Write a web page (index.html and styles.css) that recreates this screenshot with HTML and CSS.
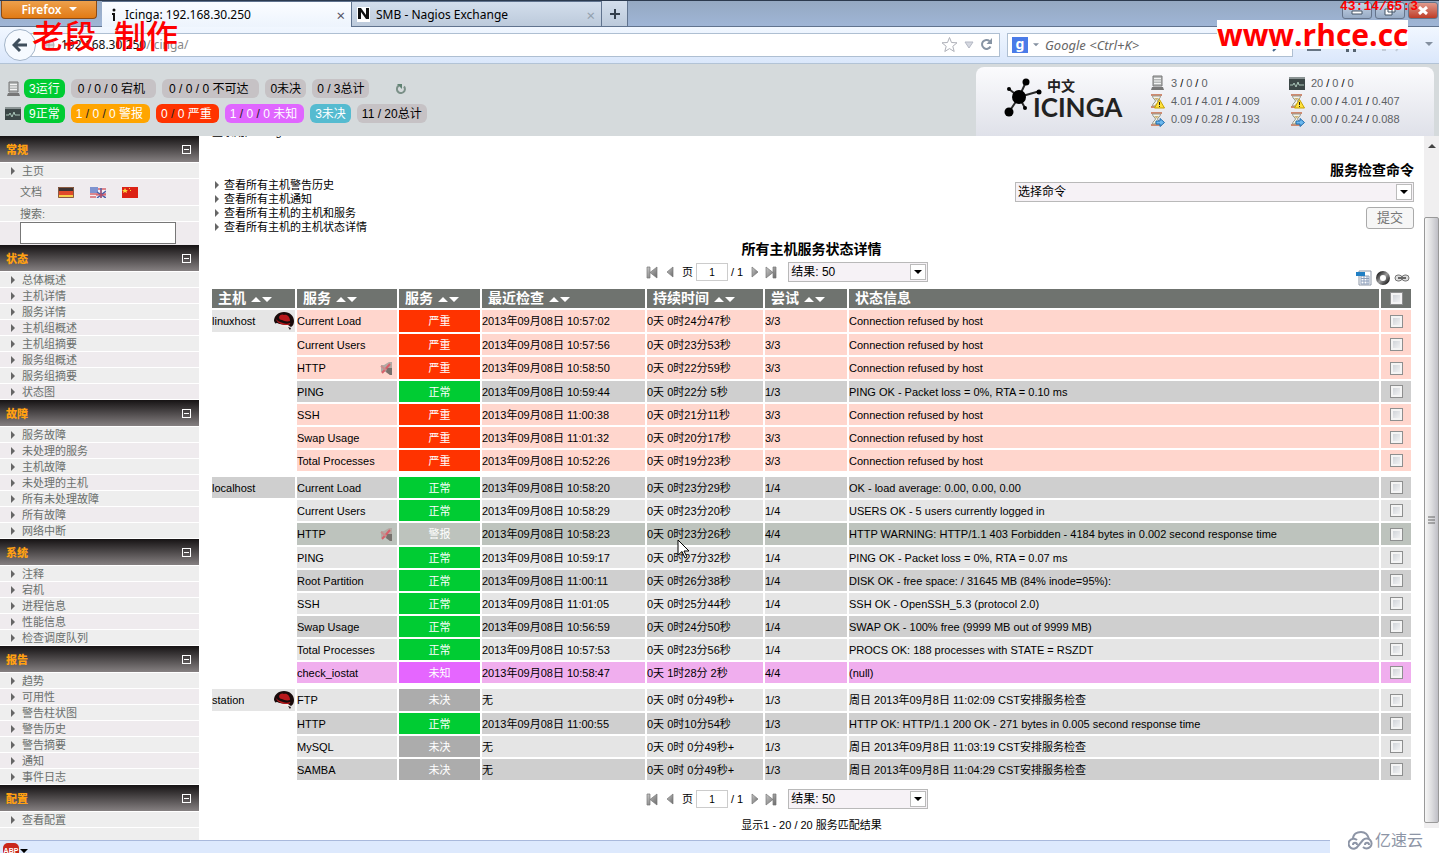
FILE: index.html
```html
<!DOCTYPE html>
<html lang="zh-CN">
<head>
<meta charset="utf-8">
<title>Icinga: 192.168.30.250</title>
<link rel="stylesheet" href="styles.css">
</head>
<body>
<svg class="defs" aria-hidden="true">
  <defs>
    <linearGradient id="metal" x1="0" y1="0" x2="1" y2="1"><stop offset="0" stop-color="#c8c8c8"/><stop offset="1" stop-color="#6a6a6a"/></linearGradient>
    <linearGradient id="ring" x1="0" y1="0" x2="1" y2="1"><stop offset="0" stop-color="#222"/><stop offset=".5" stop-color="#999"/><stop offset="1" stop-color="#222"/></linearGradient>
    <symbol id="server" viewBox="0 0 14 16"><path d="M3 1h9v10H3z" fill="#b5b8b8" stroke="#777"/><path d="M4 3.500h7M4 6h7M4 8.500h7" stroke="#f4f4f4"/><path d="M2 12h11l1 3H1z" fill="#777"/></symbol>
    <symbol id="monitor" viewBox="0 0 16 13"><path d="M0 0h16v13H0z" fill="#3c4747"/><path d="M0 0h16v2H0z" fill="#8b9494"/><path d="M1 8h3l1-2 2 4 2-5 1 3h5" fill="none" stroke="#a9c5b8"/></symbol>
    <symbol id="glass" viewBox="0 0 16 16"><path d="M2 1h11v2H2zM2 13h11v2H2z" fill="#cf8a70"/><path d="M3.500 3h8c0 3-3 3.500-3 5s3 2 3 5h-8c0-3 3-3.500 3-5s-3-2-3-5z" fill="#f2f3ea" stroke="#9a9c90"/><path d="M5 5h5L7.500 7.500zM5 13l2.500-3L10 13z" fill="#cdb67a"/></symbol>
    <symbol id="glass-warn" viewBox="0 0 16 16"><use href="#glass"/><path d="M10.500 6.500L15.500 15h-10z" fill="#ffe23c" stroke="#c7a100"/><path d="M10.500 9v3M10.500 13v1" stroke="#222"/></symbol>
    <symbol id="glass-go" viewBox="0 0 16 16"><use href="#glass"/><path d="M7 10h4V7.500l4.500 4-4.500 4V13H7z" fill="#6cb8ee" stroke="#1c6db0"/></symbol>
    <symbol id="sort" viewBox="0 0 21 6"><path d="M0 6l5-5 5 5zM11 1h10l-5 5z" fill="#fff"/></symbol>
    <symbol id="first" viewBox="0 0 12 13"><path d="M1 1h3v11H1zM11 1v11L4 6.500z" fill="url(#metal)" stroke="#777" stroke-width=".7"/></symbol>
    <symbol id="prev" viewBox="0 0 8 12"><path d="M7 1v10L1 6z" fill="url(#metal)" stroke="#777" stroke-width=".7"/></symbol>
    <symbol id="next" viewBox="0 0 8 12"><path d="M1 1v10l6-5z" fill="url(#metal)" stroke="#777" stroke-width=".7"/></symbol>
    <symbol id="last" viewBox="0 0 12 13"><path d="M8 1h3v11H8zM1 1v11l7-5.500z" fill="url(#metal)" stroke="#777" stroke-width=".7"/></symbol>
    <symbol id="hat" viewBox="0 0 20 18"><path d="M0 9C0 4 4 0 10 0c6 0 10 4 10 9 0 3-1 5-3 6l-3-2C8 13 5 12 3 11 2 11 1 12 1 11z" fill="#190b0b"/><path d="M5 5c1-3 4-3 5-2 3-1 6 2 6 6-3 1-6 0-8-1-2 0-3-1-3-3z" fill="#b8181c"/><path d="M2 7c1 2 4 3 7 4 2 1 5 1 7 0 1 1-1 2-3 2-5 0-10-2-11-6z" fill="#b8181c"/><path d="M5 12c3 1 6 2 9 1l1 4-3-2-5-1z" fill="#f6e9e6"/><path d="M14 15l3 1-1 2z" fill="#190b0b"/></symbol>
    <symbol id="mute" viewBox="0 0 13 15"><path d="M1 4h3l5-3h3v13h-2l-4-3H1z" fill="#b3aaa4"/><path d="M7 7h5v7h-2l-4-3z" fill="#77706c"/><path d="M2 12L10 3" stroke="#d8606a" stroke-width="2"/><path d="M1 5l5 4" stroke="#c98d8d" stroke-width="2"/></symbol>
    <symbol id="down" viewBox="0 0 10 6"><path d="M0 0h10L5 5z" fill="currentColor"/></symbol>
  </defs>
</svg>

<div class="tabs">
  <button class="firefox">Firefox <svg width="8" height="5"><use href="#down"/></svg></button>
  <div class="tab tab-on"><svg width="6" height="14" viewBox="0 0 6 14"><path d="M1 5h3v8H2V7H1z" fill="#111"/><circle cx="3" cy="2" r="1.500" fill="#111"/></svg><span>Icinga: 192.168.30.250</span><button aria-label="关闭">×</button></div>
  <div class="tab"><svg width="13" height="15" viewBox="0 0 13 15"><path d="M0 0h13v15H0z" fill="#fff"/><path d="M1 12V1h3l5 7V1h3v11H9L4 5v7z" fill="#111"/></svg><span>SMB - Nagios Exchange</span><button aria-label="关闭">×</button></div>
  <button class="tab-new" aria-label="新建标签页"><svg width="10" height="10" viewBox="0 0 10 10"><path d="M5 0v10M0 5h10" stroke="#333f4c" stroke-width="2"/></svg></button>
  <div class="win">
    <button aria-label="最小化"><svg width="12" height="9" viewBox="0 0 12 9"><path d="M1 5h10v3H1z" fill="#fff" stroke="#456"/></svg></button>
    <button aria-label="还原"><svg width="12" height="11" viewBox="0 0 12 11"><path d="M4 1h7v6H4zM1 4h7v6H1z" fill="#fff" stroke="#456"/></svg></button>
    <button class="win-close" aria-label="关闭窗口"><svg width="12" height="9" viewBox="0 0 12 9"><path d="M2 1l8 7M10 1L2 8" stroke="#fff" stroke-width="3"/></svg></button>
  </div>
</div>

<div class="toolbar">
  <button class="back" aria-label="后退"><svg width="16" height="16" viewBox="0 0 16 16"><path d="M8 2L2 8l6 6M3 8h12" fill="none" stroke="#3f4e5c" stroke-width="3"/></svg></button>
  <div class="url"><svg width="12" height="12" viewBox="0 0 12 12"><circle cx="6" cy="6" r="5" fill="#ddd" stroke="#aaa"/><path d="M6 1v10M1 6h10" stroke="#aaa"/></svg>
    <span class="address"><b>192.168.30.250</b>/icinga/</span>
    <svg width="17" height="17" viewBox="0 0 17 17"><path d="M8.500 1.500l2 5 5.500.3-4.200 3.500 1.400 5.200-4.700-2.900-4.700 2.900 1.400-5.200L1 6.800l5.500-.3z" fill="#fff" stroke="#aeb0b8"/></svg>
    <svg width="10" height="8" viewBox="0 0 10 8"><path d="M1 1h8L5 7z" fill="#d5d8e0" stroke="#b4b8c4"/></svg>
    <svg width="13" height="13" viewBox="0 0 13 13"><path d="M10.500 8.500A4.500 4.500 0 1 1 9.500 3" fill="none" stroke="#8794a4" stroke-width="2"/><path d="M12 0v6H6.500z" fill="#8794a4"/></svg>
  </div>
  <div class="find"><span class="g">g</span><svg class="grey" width="6" height="4"><use href="#down"/></svg><input type="text" aria-label="搜索引擎" placeholder="Google &lt;Ctrl+K&gt;"><svg width="14" height="14" viewBox="0 0 14 14"><circle cx="9" cy="5" r="4" fill="none" stroke="#47688c" stroke-width="2"/><path d="M6 8l-5 5" stroke="#47688c" stroke-width="2"/></svg></div>
  <div class="tools">
    <svg width="16" height="14" viewBox="0 0 16 14"><path d="M1 2h14v11H1z" fill="#667483"/><path d="M5 2h6v5H5z" fill="#e8f0fa"/></svg>
    <svg width="14" height="14" viewBox="0 0 14 14"><path d="M0 7l7-6 7 6h-2v7H9V9H5v5H2V7z" fill="#566370"/></svg>
    <svg width="22" height="14" viewBox="0 0 22 14"><path d="M1 12h4M15 3l4 4-4 6" fill="none" stroke="#c3ccd9" stroke-width="2"/></svg>
    <svg class="grey" width="8" height="5"><use href="#down"/></svg>
  </div>
</div>

<header class="head">
  <div class="counts">
    <div class="count-row"><svg width="16" height="16"><use href="#server"/></svg>
      <a href="#" class="pill green">3运行</a><a href="#" class="pill wider">0 / 0 / 0 宕机</a><a href="#" class="pill wider">0 / 0 / 0 不可达</a><a href="#" class="pill">0未决</a><a href="#" class="pill">0 / 3总计</a>
      <button class="refresh" aria-label="刷新"><svg width="10" height="11" viewBox="0 0 10 11"><path d="M3 2.500A4 4 0 1 0 8 3.500" fill="none" stroke="#7b9088" stroke-width="2"/><path d="M1 1h5v5z" fill="#5f8272"/></svg></button></div>
    <div class="count-row"><svg width="16" height="13"><use href="#monitor"/></svg>
      <a href="#" class="pill green">9正常</a><a href="#" class="pill orange wide">1 <i>/</i> 0 <i>/</i> 0 警报</a><a href="#" class="pill red wide">0 <i>/</i> 0 严重</a><a href="#" class="pill violet wide">1 <i>/</i> 0 <i>/</i> 0 未知</a><a href="#" class="pill cyan">3未决</a><a href="#" class="pill">11 / 20总计</a></div>
  </div>
  <div class="panel">
    <div class="logo">
      <svg width="38" height="40" viewBox="0 0 38 40"><path d="M15 19L22 4M15 19L5 11M15 19L5 34M15 19l6 11M15 19l21-6" stroke="#2a2a2a" stroke-width="2"/><circle cx="15" cy="19" r="7"/><circle cx="22" cy="4" r="3.500"/><circle cx="5" cy="11" r="2"/><circle cx="5" cy="34" r="4.500"/><circle cx="21" cy="30" r="2"/><circle cx="35" cy="14" r="2.500"/></svg>
      <div class="brand"><small>中文</small><strong>ICINGA</strong></div>
    </div>
    <div class="stats">
      <span><svg width="16" height="16"><use href="#server"/></svg>3 <i>/</i> 0 <i>/</i> 0</span>
      <span><svg width="16" height="16"><use href="#glass-warn"/></svg>4.01 <i>/</i> 4.01 <i>/</i> 4.009</span>
      <span><svg width="16" height="16"><use href="#glass-go"/></svg>0.09 <i>/</i> 0.28 <i>/</i> 0.193</span>
    </div>
    <div class="stats">
      <span><svg width="16" height="13"><use href="#monitor"/></svg>20 <i>/</i> 0 <i>/</i> 0</span>
      <span><svg width="16" height="16"><use href="#glass-warn"/></svg>0.00 <i>/</i> 4.01 <i>/</i> 0.407</span>
      <span><svg width="16" height="16"><use href="#glass-go"/></svg>0.00 <i>/</i> 0.24 <i>/</i> 0.088</span>
    </div>
  </div>
</header>

<div class="body">
  <nav class="side">
    <h2>常规<button aria-label="折叠常规"></button></h2>
    <ul><li><a href="#">主页</a></li></ul>
    <div class="docs">文档
      <a href="#" aria-label="Deutsch"><svg width="16" height="11" viewBox="0 0 16 11"><path d="M0 0h16v4H0z" fill="#3c3232"/><path d="M0 4h16v4H0z" fill="#e04a2a"/><path d="M0 8h16v3H0z" fill="#f7cf4c"/><path d="M.5.5h15v10H.5z" fill="none" stroke="#8b5a40"/></svg></a>
      <a href="#" aria-label="English"><svg width="16" height="11" viewBox="0 0 16 11"><path d="M0 0h16v11H0z" fill="#f3eef4"/><path d="M0 0h8v6H0z" fill="#7f93cf"/><path d="M8 2h8M0 7h16M0 10h6" stroke="#d5656c" stroke-width="1.500"/><path d="M11 1v10M7 11l9-7M7 5l9 6" stroke="#4b61a8" stroke-width="1.500"/><path d="M11 3v8M6 8h10" stroke="#d44d58"/></svg></a>
      <a href="#" aria-label="中文"><svg width="16" height="11" viewBox="0 0 16 11"><path d="M0 0h16v11H0z" fill="#dc2114"/><path d="M3 1l1 2h2L4.500 4.200 5 6 3 5 1 6l.5-1.800L0 3h2zM7 1h1v1H7zM8 3h1v1H8z" fill="#fbd33d"/></svg></a>
    </div>
    <label class="search-label" for="q">搜索:</label>
    <div class="search"><input id="q" type="text"></div>

    <h2>状态<button aria-label="折叠状态"></button></h2>
    <ul><li><a href="#">总体概述</a></li><li><a href="#">主机详情</a></li><li><a href="#">服务详情</a></li><li><a href="#">主机组概述</a></li><li><a href="#">主机组摘要</a></li><li><a href="#">服务组概述</a></li><li><a href="#">服务组摘要</a></li><li><a href="#">状态图</a></li></ul>
    <h2>故障<button aria-label="折叠故障"></button></h2>
    <ul><li><a href="#">服务故障</a></li><li><a href="#">未处理的服务</a></li><li><a href="#">主机故障</a></li><li><a href="#">未处理的主机</a></li><li><a href="#">所有未处理故障</a></li><li><a href="#">所有故障</a></li><li><a href="#">网络中断</a></li></ul>
    <h2>系统<button aria-label="折叠系统"></button></h2>
    <ul><li><a href="#">注释</a></li><li><a href="#">宕机</a></li><li><a href="#">进程信息</a></li><li><a href="#">性能信息</a></li><li><a href="#">检查调度队列</a></li></ul>
    <h2>报告<button aria-label="折叠报告"></button></h2>
    <ul><li><a href="#">趋势</a></li><li><a href="#">可用性</a></li><li><a href="#">警告柱状图</a></li><li><a href="#">警告历史</a></li><li><a href="#">警告摘要</a></li><li><a href="#">通知</a></li><li><a href="#">事件日志</a></li></ul>
    <h2>配置<button aria-label="折叠配置"></button></h2>
    <ul><li><a href="#">查看配置</a></li></ul>
  </nav>

  <main class="main">
    <div class="login"><span>登录用户 icingaadmin</span></div>
    <div class="top">
      <ul class="links"><li><a href="#">查看所有主机警告历史</a></li><li><a href="#">查看所有主机通知</a></li><li><a href="#">查看所有主机的主机和服务</a></li><li><a href="#">查看所有主机的主机状态详情</a></li></ul>
      <form class="command">
        <label for="cmd">服务检查命令</label>
        <div class="select"><select id="cmd"><option>选择命令</option></select><span><svg width="8" height="5"><use href="#down"/></svg></span></div>
        <button type="button" disabled>提交</button>
      </form>
    </div>
    <h1>所有主机服务状态详情</h1>
    <div class="pager">
      <button aria-label="首页"><svg width="12" height="13"><use href="#first"/></svg></button><button aria-label="上一页"><svg width="8" height="12"><use href="#prev"/></svg></button>
      <label for="p1">页</label><input id="p1" type="text" value="1"><span>/ 1</span>
      <button aria-label="下一页"><svg width="8" height="12"><use href="#next"/></svg></button><button aria-label="末页"><svg width="12" height="13"><use href="#last"/></svg></button>
      <div class="select"><select aria-label="结果"><option>结果: 50</option></select><span><svg width="8" height="5"><use href="#down"/></svg></span></div>
      <div class="exports">
        <a href="#" aria-label="CSV"><svg width="16" height="16" viewBox="0 0 16 16"><path d="M3 1h12v14H3z" fill="#fff" stroke="#8d97a6"/><path d="M5 6h8v8H5zM5 8.500h8M5 11h8M8 6v8M11 6v8" fill="none" stroke="#8d9fba"/><path d="M0 2h9v4H0z" fill="#217fc4"/></svg></a>
        <a href="#" aria-label="JSON"><svg width="14" height="14" viewBox="0 0 14 14"><circle cx="7" cy="7" r="5" fill="none" stroke="url(#ring)" stroke-width="4"/></svg></a>
        <a href="#" aria-label="链接"><svg width="16" height="8" viewBox="0 0 16 8"><rect x="1" y="1" width="7" height="6" rx="3" fill="#ddd" stroke="#777"/><rect x="8" y="1" width="7" height="6" rx="3" fill="#ddd" stroke="#777"/><path d="M4 4h8" stroke="#666" stroke-width="2"/></svg></a>
      </div>
    </div>

    <table class="grid">
      <colgroup><col class="c-host"><col class="c-svc"><col class="c-state"><col class="c-check"><col class="c-dur"><col class="c-try"><col><col class="c-box"></colgroup>
      <thead><tr><th>主机<svg width="21" height="6"><use href="#sort"/></svg></th><th>服务<svg width="21" height="6"><use href="#sort"/></svg></th><th>服务<svg width="21" height="6"><use href="#sort"/></svg></th><th>最近检查<svg width="21" height="6"><use href="#sort"/></svg></th><th>持续时间<svg width="21" height="6"><use href="#sort"/></svg></th><th>尝试<svg width="21" height="6"><use href="#sort"/></svg></th><th>状态信息</th><th class="box"><input type="checkbox" aria-label="全选"></th></tr></thead>
      <tbody>
      <tr class="crit tall"><td class="host light"><div>linuxhost<svg width="20" height="18"><use href="#hat"/></svg></div></td><td>Current Load</td><td>严重</td><td>2013年09月08日 10:57:02</td><td>0天 0时24分47秒</td><td>3/3</td><td>Connection refused by host</td><td><input type="checkbox" aria-label="选择"></td></tr>
      <tr class="crit"><td class="none"></td><td>Current Users</td><td>严重</td><td>2013年09月08日 10:57:56</td><td>0天 0时23分53秒</td><td>3/3</td><td>Connection refused by host</td><td><input type="checkbox" aria-label="选择"></td></tr>
      <tr class="crit tall"><td class="none"></td><td><div>HTTP<svg width="13" height="15"><use href="#mute"/></svg></div></td><td>严重</td><td>2013年09月08日 10:58:50</td><td>0天 0时22分59秒</td><td>3/3</td><td>Connection refused by host</td><td><input type="checkbox" aria-label="选择"></td></tr>
      <tr class="ok dark"><td class="none"></td><td>PING</td><td>正常</td><td>2013年09月08日 10:59:44</td><td>0天 0时22分 5秒</td><td>1/3</td><td>PING OK - Packet loss = 0%, RTA = 0.10 ms</td><td><input type="checkbox" aria-label="选择"></td></tr>
      <tr class="crit"><td class="none"></td><td>SSH</td><td>严重</td><td>2013年09月08日 11:00:38</td><td>0天 0时21分11秒</td><td>3/3</td><td>Connection refused by host</td><td><input type="checkbox" aria-label="选择"></td></tr>
      <tr class="crit"><td class="none"></td><td>Swap Usage</td><td>严重</td><td>2013年09月08日 11:01:32</td><td>0天 0时20分17秒</td><td>3/3</td><td>Connection refused by host</td><td><input type="checkbox" aria-label="选择"></td></tr>
      <tr class="crit"><td class="none"></td><td>Total Processes</td><td>严重</td><td>2013年09月08日 10:52:26</td><td>0天 0时19分23秒</td><td>3/3</td><td>Connection refused by host</td><td><input type="checkbox" aria-label="选择"></td></tr>
      <tr class="gap"><td colspan="8"></td></tr>
      <tr class="ok dark"><td class="host">localhost</td><td>Current Load</td><td>正常</td><td>2013年09月08日 10:58:20</td><td>0天 0时23分29秒</td><td>1/4</td><td>OK - load average: 0.00, 0.00, 0.00</td><td><input type="checkbox" aria-label="选择"></td></tr>
      <tr class="ok"><td class="none"></td><td>Current Users</td><td>正常</td><td>2013年09月08日 10:58:29</td><td>0天 0时23分20秒</td><td>1/4</td><td>USERS OK - 5 users currently logged in</td><td><input type="checkbox" aria-label="选择"></td></tr>
      <tr class="ack tall"><td class="none"></td><td><div>HTTP<svg width="13" height="15"><use href="#mute"/></svg></div></td><td>警报</td><td>2013年09月08日 10:58:23</td><td>0天 0时23分26秒</td><td>4/4</td><td>HTTP WARNING: HTTP/1.1 403 Forbidden - 4184 bytes in 0.002 second response time</td><td><input type="checkbox" aria-label="选择"></td></tr>
      <tr class="ok"><td class="none"></td><td>PING</td><td>正常</td><td>2013年09月08日 10:59:17</td><td>0天 0时27分32秒</td><td>1/4</td><td>PING OK - Packet loss = 0%, RTA = 0.07 ms</td><td><input type="checkbox" aria-label="选择"></td></tr>
      <tr class="ok dark"><td class="none"></td><td>Root Partition</td><td>正常</td><td>2013年09月08日 11:00:11</td><td>0天 0时26分38秒</td><td>1/4</td><td>DISK OK - free space: / 31645 MB (84% inode=95%):</td><td><input type="checkbox" aria-label="选择"></td></tr>
      <tr class="ok"><td class="none"></td><td>SSH</td><td>正常</td><td>2013年09月08日 11:01:05</td><td>0天 0时25分44秒</td><td>1/4</td><td>SSH OK - OpenSSH_5.3 (protocol 2.0)</td><td><input type="checkbox" aria-label="选择"></td></tr>
      <tr class="ok dark"><td class="none"></td><td>Swap Usage</td><td>正常</td><td>2013年09月08日 10:56:59</td><td>0天 0时24分50秒</td><td>1/4</td><td>SWAP OK - 100% free (9999 MB out of 9999 MB)</td><td><input type="checkbox" aria-label="选择"></td></tr>
      <tr class="ok"><td class="none"></td><td>Total Processes</td><td>正常</td><td>2013年09月08日 10:57:53</td><td>0天 0时23分56秒</td><td>1/4</td><td>PROCS OK: 188 processes with STATE = RSZDT</td><td><input type="checkbox" aria-label="选择"></td></tr>
      <tr class="unknown"><td class="none"></td><td>check_iostat</td><td>未知</td><td>2013年09月08日 10:58:47</td><td>0天 1时28分 2秒</td><td>4/4</td><td>(null)</td><td><input type="checkbox" aria-label="选择"></td></tr>
      <tr class="gap"><td colspan="8"></td></tr>
      <tr class="pending tall"><td class="host"><div>station<svg width="20" height="18"><use href="#hat"/></svg></div></td><td>FTP</td><td>未决</td><td>无</td><td>0天 0时 0分49秒+</td><td>1/3</td><td>周日 2013年09月8日 11:02:09 CST安排服务检查</td><td><input type="checkbox" aria-label="选择"></td></tr>
      <tr class="ok dark"><td class="none"></td><td>HTTP</td><td>正常</td><td>2013年09月08日 11:00:55</td><td>0天 0时10分54秒</td><td>1/3</td><td>HTTP OK: HTTP/1.1 200 OK - 271 bytes in 0.005 second response time</td><td><input type="checkbox" aria-label="选择"></td></tr>
      <tr class="pending"><td class="none"></td><td>MySQL</td><td>未决</td><td>无</td><td>0天 0时 0分49秒+</td><td>1/3</td><td>周日 2013年09月8日 11:03:19 CST安排服务检查</td><td><input type="checkbox" aria-label="选择"></td></tr>
      <tr class="pending dark"><td class="none"></td><td>SAMBA</td><td>未决</td><td>无</td><td>0天 0时 0分49秒+</td><td>1/3</td><td>周日 2013年09月8日 11:04:29 CST安排服务检查</td><td><input type="checkbox" aria-label="选择"></td></tr>
      </tbody>
    </table>

    <div class="pager">
      <button aria-label="首页"><svg width="12" height="13"><use href="#first"/></svg></button><button aria-label="上一页"><svg width="8" height="12"><use href="#prev"/></svg></button>
      <label for="p2">页</label><input id="p2" type="text" value="1"><span>/ 1</span>
      <button aria-label="下一页"><svg width="8" height="12"><use href="#next"/></svg></button><button aria-label="末页"><svg width="12" height="13"><use href="#last"/></svg></button>
      <div class="select"><select aria-label="结果"><option>结果: 50</option></select><span><svg width="8" height="5"><use href="#down"/></svg></span></div>
    </div>
    <p class="total">显示1 - 20 / 20 服务匹配结果</p>
  </main>
  <div class="scroll"><svg width="8" height="5" viewBox="0 0 8 5"><path d="M0 5l4-4 4 4z" fill="#444"/></svg><div class="thumb"><svg width="7" height="8" viewBox="0 0 7 8"><path d="M0 1h7M0 4h7M0 7h7" stroke="#666"/></svg></div></div>
</div>

<footer class="foot"><div class="addons"><span class="abp">ABP</span><svg width="8" height="5"><use href="#down"/></svg></div></footer>

<div class="mark mark-name"><span>老段</span><span>制作</span></div>
<div class="mark mark-time">43:14/65:3</div>
<div class="mark mark-site">www.rhce.cc</div>
<div class="mark mark-cloud"><svg width="26" height="20" viewBox="0 0 26 20"><g fill="none" stroke="#8d95a6" stroke-width="2"><path d="M5 8C5 3 9 1 13 1s7 3 8 7"/><path d="M9 9a5 5 0 1 0 1 6l5-6a5 5 0 1 1 0 7"/><path d="M5 14c0-3 4-3 4 0M17 14c0-3 4-3 4 0"/></g></svg>亿速云</div>
<svg class="cursor" width="13" height="20" viewBox="0 0 13 20"><path d="M1 1v15l4-3.500 3 6.500 2-1-3-6h5z" fill="#fff" stroke="#000"/></svg>
</body>
</html>
```
FILE: styles.css
```css
* { box-sizing: border-box; }
html, body { height: 100%; }
body { margin: 0; display: flex; flex-direction: column; overflow: hidden; background: #fff; color: #000; font: 11px/14px "Liberation Sans", "Noto Sans CJK SC", sans-serif; }
a { color: inherit; text-decoration: none; }
button, input, select { font: inherit; color: inherit; margin: 0; }
button { padding: 0; border: 0; background: none; }
ul { list-style: none; margin: 0; padding: 0; }
i { font-style: normal; }
svg { flex: none; display: block; }
.defs { position: absolute; width: 0; height: 0; }

/* browser tabs */
.tabs { flex: none; height: 27px; display: flex; align-items: stretch; border-top: 1px solid #2c3a4e; border-bottom: 1px solid #60738e; background: linear-gradient(#95a9c2, #9fb5d6); font: 12px/16px "Noto Sans", "Noto Sans CJK SC", sans-serif; }
.firefox { width: 96px; height: 18px; margin: 0 5px 0 1px; display: flex; align-items: center; justify-content: center; gap: 7px; border: 1px solid #8c4a13; border-top: 0; border-radius: 0 0 4px 4px; background: linear-gradient(#eda04c, #e17a14); color: #fff; font-weight: 600; }
.tab { width: 250px; padding: 1px 6px 0 5px; display: flex; align-items: center; gap: 6px; border: 1px solid #60738e; border-width: 1px 1px 0 0; background: linear-gradient(#d3deec, #bccadb); }
.tab span { flex: 1; white-space: nowrap; }
.tab button { font-size: 15px; color: #93a0ae; }
.tab-on { padding-left: 9px; margin-bottom: -1px; background: linear-gradient(#fbfdff, #edf4fd); gap: 8px; }
.tab-on button { color: #556; }
.tab-new { width: 26px; display: flex; align-items: center; justify-content: center; border-right: 1px solid #60738e; background: linear-gradient(#d3deec, #bccadb); }
.win { margin-left: auto; display: flex; gap: 3px; padding: 1px 1px 0 0; }
.win button { width: 30px; height: 17px; display: flex; align-items: center; justify-content: center; border: 1px solid #65748b; border-radius: 3px; background: linear-gradient(#c7d5e6, #97abc5); }
.win .win-close { background: linear-gradient(#e09a8c, #bf3d28); }

/* navigation toolbar */
.toolbar { flex: none; height: 37px; display: flex; align-items: center; padding: 0 6px 1px 4px; border-bottom: 1px solid #b2c3d6; background: linear-gradient(#f1f7ff, #dae7fb); font: 12px/16px "Noto Sans", sans-serif; }
.back { width: 32px; height: 32px; z-index: 1; display: flex; align-items: center; justify-content: center; border: 1px solid #a3b4c8; border-radius: 50%; background: #f6faff; }
.url { flex: 1; height: 24px; margin-left: -6px; padding: 0 6px 0 12px; display: flex; align-items: center; gap: 6px; border: 1px solid #aebfd2; background: #fff; }
.address { flex: 1; color: #888; }
.address b { color: #111; font-weight: 400; }
.find { width: 286px; height: 24px; margin-left: 7px; padding: 0 6px 0 4px; display: flex; align-items: center; gap: 5px; border: 1px solid #aebfd2; background: #fff; }
.find input { flex: 1; min-width: 0; border: 0; padding: 0 1px; background: none; font-size: 13px; }
.find input::placeholder { color: #666; font-style: italic; opacity: 1; }
.g { width: 16px; height: 16px; background: #4a7be8; color: #fff; font-weight: 700; font-size: 14px; line-height: 14px; text-align: center; }
.grey { color: #8490a0; }
.tools { width: 140px; display: flex; align-items: center; justify-content: space-between; padding-left: 13px; }

/* status header */
.head { flex: none; height: 72px; display: flex; justify-content: space-between; background: #d5dadc; }
.counts { padding: 15px 0 0 5px; display: flex; flex-direction: column; gap: 6px; }
.count-row { display: flex; align-items: center; gap: 6px; font-size: 12px; }
.count-row > svg { margin-right: -3px; }
.pill { height: 19px; padding: 0 5px; border-radius: 6px; background: #c6c2c5; line-height: 20px; white-space: nowrap; }
.wide { padding-right: 7px; }
.wider { padding: 0 11px 0 7px; }
.pill i { color: #222; }
.green { background: #0c3; color: #fff; }
.orange { background: #ffa500; color: #fff; }
.red { background: #f30; color: #fff; }
.violet { background: #e066ff; color: #fff; }
.cyan { background: #55bbd0; color: #fff; }
.refresh { margin-left: 21px; }
.panel { width: 458px; margin: 3px 5px 0 0; padding: 7px 0 0 28px; display: flex; border-radius: 8px 8px 0 0; background: linear-gradient(#fbfbfd, #dfe1e9); }
.logo { width: 145px; display: flex; padding-top: 4px; color: #222; }
.brand { display: flex; flex-direction: column; margin-left: -9px; white-space: nowrap; }
.brand small { padding-left: 14px; font-size: 14px; line-height: 16px; font-weight: 700; }
.brand strong { font: 700 26px/27px Lato, sans-serif; }
.stats { width: 140px; display: flex; flex-direction: column; color: #5d6165; }
.stats span { height: 18px; display: flex; align-items: center; gap: 3px; white-space: nowrap; }
.stats svg { margin-right: 3px; }
.stats i { color: #000; }

/* sidebar */
.body { flex: 1; min-height: 0; display: flex; }
.side { flex: none; width: 199px; overflow: hidden; background: #eee; color: #6a6f6c; }
.side h2 { height: 27px; margin: 0; padding: 1px 8px 0 6px; display: flex; align-items: center; justify-content: space-between; border-bottom: 1px solid #fff; background: linear-gradient(#161314, #858081); color: #ffa012; font-size: 11px; font-weight: 900; }
.side h2 button { width: 9px; height: 9px; border: 1px solid #fff; background: linear-gradient(#fff, #fff) center / 5px 1px no-repeat; }
.side li { height: 16px; padding: 1px 0 0 11px; border-bottom: 1px solid #fff; }
.side li:nth-child(even) { background: #efebee; }
.side li a, .links a { display: flex; align-items: center; gap: 7px; }
.side li a::before, .links a::before { content: ""; border: 4px solid transparent; border-left: 4px solid #666; border-right: 0; }
.docs { height: 27px; padding-left: 20px; display: flex; align-items: center; gap: 16px; border-bottom: 1px solid #fff; background: #efebee; }
.search-label { display: block; height: 15px; padding-left: 20px; line-height: 16px; }
.search { height: 24px; padding-left: 20px; border-top: 1px solid #fff; background: #efebee; }
.search input { display: block; width: 156px; height: 22px; border: 1px solid #777; background: #fff; }

/* content */
.main { flex: 1; min-width: 0; padding: 0 13px 0 13px; display: flex; flex-direction: column; }
.login { flex: none; height: 3px; overflow: hidden; display: flex; align-items: flex-end; }
.top { display: flex; justify-content: space-between; align-items: flex-start; padding-top: 24px; }
.links { padding: 15px 0 0 3px; }
.links a { gap: 5px; }
.command { width: 399px; margin-right: -3px; display: flex; flex-direction: column; align-items: flex-end; gap: 5px; }
.command label { font-size: 14px; line-height: 14px; font-weight: 700; }
.command button { width: 48px; height: 22px; border: 1px solid #aaa; border-radius: 3px; background: #f6f6f6; color: #777; font-size: 13px; }
.select { position: relative; width: 100%; height: 20px; }
.select select { display: block; width: 100%; height: 20px; padding: 0 2px; border: 1px solid #b9b9b9; border-radius: 0; background: #f6f2f6; appearance: none; font-size: 12px; }
.select span { position: absolute; top: 2px; right: 2px; width: 16px; height: 16px; display: flex; align-items: center; justify-content: center; border: 1px solid #bbb; background: #fff; pointer-events: none; }
h1 { margin: 8px 0 5px; font-size: 14px; line-height: 14px; text-align: center; }
.pager { position: relative; height: 20px; display: flex; align-items: center; padding-left: 434px; gap: 5px; margin: 1px 0 5px; }
.pager button { height: 14px; display: flex; align-items: center; }
.pager button + button { margin-left: 3px; }
.pager label { padding-left: 3px; }
.pager input { width: 32px; height: 18px; margin-left: -2px; padding: 0; border: 1px solid #ccc; background: #fff; text-align: center; font-size: 10px; }
.pager span { margin-left: -2px; }
.pager .select span { margin: 0; }
.pager span + button { margin-left: 3px; }
.pager button + button:nth-of-type(4) { margin-left: 1px; }
.pager .select { width: 140px; margin-left: 6px; }
.exports { position: absolute; right: 1px; bottom: -4px; display: flex; align-items: center; gap: 4px; }
.grid { table-layout: fixed; border-spacing: 2px; margin: 0 -2px; width: calc(100% + 4px); }
.c-host { width: 83px; } .c-svc { width: 100px; } .c-state { width: 81px; } .c-check { width: 163px; } .c-dur { width: 116px; } .c-try { width: 82px; } .c-box { width: 30px; }
th { height: 19px; padding: 0 6px; background: #6f736f; color: #fff; font-size: 14px; line-height: 19px; text-align: left; white-space: nowrap; }
th svg { display: inline-block; margin-left: 5px; vertical-align: 1px; }
td { height: 21px; padding: 0; background: #e5e5e5; white-space: nowrap; line-height: 14px; }
.tall td { height: 22px; }
.gap td { height: 2px; background: none; line-height: 0; }
.dark td { background: #cfcfcf; }
.crit td { background: #ffd6cd; }
.unknown td { background: #f0aeee; }
.ack td { background: #bdc3bd; }
td:nth-child(3) { color: #fff; text-align: center; }
.ok td:nth-child(3) { background: #0c3; }
.crit td:nth-child(3) { background: #f30; }
.pending td:nth-child(3) { background: #acacac; }
.unknown td:nth-child(3) { background: #e566ff; }
.crit .light { background: #e5e5e5; }
tr .none { background: none; }
td div { display: flex; align-items: center; justify-content: space-between; }
td:nth-child(2) div { padding-right: 4px; height: 16px; }
td.host div { height: 18px; padding-right: 1px; }
td:last-child, th.box { text-align: center; padding: 0; }
.gap td:last-child { height: 2px; }
input[type="checkbox"] { appearance: none; display: block; width: 13px; height: 13px; margin: 0 auto; border: 1px solid #8e8f8f; background: linear-gradient(135deg, #c8ccd2, #fafafa); box-shadow: inset 0 0 0 2px #f4f4f4; }
.grid + .pager { margin: 7px 0 9px; }
.total { margin: 0; text-align: center; }

/* scroll bar */
.scroll { flex: none; width: 15px; padding-top: 7px; display: flex; flex-direction: column; align-items: center; background: #f0eff0; margin-bottom: 12px; }
.thumb { flex: 1; width: 15px; margin: 69px 0 5px; display: flex; align-items: center; justify-content: center; border: 1px solid #999; border-radius: 2px; background: linear-gradient(90deg, #f6f6f6, #dedee0 50%, #bfbfc6); }

/* add-on bar */
.foot { flex: none; height: 13px; overflow: hidden; padding-right: 109px; }
.addons { height: 13px; display: flex; align-items: flex-start; gap: 1px; padding: 2px 0 0 3px; border-top: 1px solid #a9b9dc; background: #dde9fd; }
.addons svg { margin-top: 6px; }
.abp { width: 16px; height: 16px; border-radius: 5px; background: #c9261c; color: #fff; font-size: 7px; font-weight: 700; line-height: 16px; text-align: center; }

/* video overlays */
.mark { position: absolute; z-index: 3; white-space: nowrap; color: #f00; }
.mark-name { left: 32px; top: 16px; display: flex; gap: 18px; font: 500 32px/36px "Noto Sans CJK SC", sans-serif; }
.mark-time { left: 1340px; top: 0; font: 700 13px/13px "Liberation Mono", monospace; }
.mark-site { left: 1217px; top: 20px; height: 29px; background: #fff; font: 700 30px/29px "Open Sans", sans-serif; }
.mark-cloud { right: 16px; bottom: 2px; display: flex; align-items: center; gap: 1px; color: #8d95a6; font-size: 16px; line-height: 20px; }
.cursor { position: absolute; left: 677px; top: 539px; z-index: 2; }
```
